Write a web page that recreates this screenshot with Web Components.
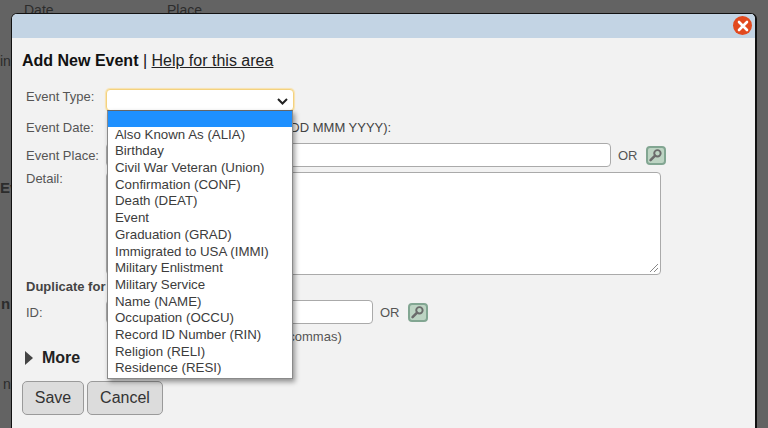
<!DOCTYPE html>
<html>
<head>
<meta charset="utf-8">
<title>Add New Event</title>
<style>
  html, body { margin: 0; height: 100%; overflow: hidden; }
  body { font-family: "Liberation Sans", Arial, sans-serif; font-size: 13px; color: #333; }
</style>
</head>
<body>
<event-page>
  <event-dialog>
    <event-form></event-form>
  </event-dialog>
</event-page>

<script>
const keyIcon = `
  <svg width="15" height="15" viewBox="0 0 14 14" aria-hidden="true">
    <circle cx="8.8" cy="5" r="3" fill="none" stroke="#6b6b6b" stroke-width="1.8"/>
    <path d="M6.6 7.2 2.4 11.4" stroke="#6b6b6b" stroke-width="2.4" stroke-linecap="round"/>
  </svg>`;

class EventPage extends HTMLElement {
  constructor() {
    super();
    this.attachShadow({ mode: 'open' });
    this.shadowRoot.innerHTML = `
      <style>
        :host { display: block; position: relative; width: 768px; height: 428px; overflow: hidden; background: #636363; color: #333; }
        .bg { position: absolute; font-size: 14px; color: #2c2c2c; }
        .bold { font-weight: bold; }
        .sheet { padding: 13px 11px 0 11px; }
      </style>
      <span class="bg" style="left:24px;top:2px">Date</span>
      <span class="bg" style="left:167px;top:2px">Place</span>
      <span class="bg" style="left:0;top:53px">in</span>
      <span class="bg bold" style="left:0;top:179px;font-size:15px">Ev</span>
      <span class="bg bold" style="left:1px;top:295px;font-size:15px">n</span>
      <span class="bg" style="left:3px;top:376px">n</span>
      <div class="sheet"><slot></slot></div>
    `;
  }
}

class EventDialog extends HTMLElement {
  constructor() {
    super();
    this.attachShadow({ mode: 'open' });
    this.shadowRoot.innerHTML = `
      <style>
        :host { display: block; width: 746px; height: 440px; box-sizing: border-box; border: 1px solid #111; border-right-width: 2px; border-radius: 6px 6px 0 0; background: #f2f2f2; position: relative; overflow: hidden; }
        .bar { height: 24px; background: #c3d4e4; }
        .close { position: absolute; top: 2px; right: 3px; width: 19px; height: 19px; border-radius: 50%; background: #e2491e; display: grid; place-items: center; }
      </style>
      <div class="bar"></div>
      <div class="close">
        <svg width="12" height="12" viewBox="0 0 12 12" aria-hidden="true">
          <path d="M2 2 10 10M10 2 2 10" stroke="#fff" stroke-width="2.6" stroke-linecap="round"/>
        </svg>
      </div>
      <slot></slot>
    `;
  }
}

class EventForm extends HTMLElement {
  constructor() {
    super();
    this.attachShadow({ mode: 'open' });
    this.shadowRoot.innerHTML = `
      <style>
        :host { display: block; position: relative; padding: 13px 10px 0; font-size: 13px; color: #444; }
        h2 { margin: 0; font-size: 16px; line-height: 20px; font-weight: normal; color: #111; }
        h2 b { font-weight: bold; }
        h2 a { color: #222; text-decoration: underline; }
        .row { display: grid; grid-template-columns: 80px 1fr; align-items: center; padding-left: 4px; }
        .row label { color: #555; }
        .type { margin-top: 18px; height: 22px; }
        .type label { margin-top: -7px; }
        .date { margin-top: 4px; height: 24px; }
        .place { margin-top: 4px; height: 24px; }
        .detail { margin-top: 5px; align-items: start; }
        .detail label { margin-top: -1px; }
        .line { display: flex; align-items: center; }
        .box { box-sizing: border-box; background: #fff; border: 1px solid #aaa; border-radius: 4px; }
        .select { width: 188px; height: 22px; border-color: #f4d27e; box-shadow: 0 0 1px 1px #f8e2ad; position: relative; }
        .select svg { position: absolute; right: 5px; top: 8px; }
        .hint { margin-left: 180px; }
        .or { margin: 0 7px; color: #555; }
        .key { box-sizing: border-box; width: 20px; height: 19px; border: 2px solid #82a692; border-radius: 4px; background: #bdd4c3; display: grid; place-items: center; margin-left: 1px; }
        .key svg { width: 15px; height: 15px; }
        .text { height: 24px; }
        .area { position: relative; width: 555px; height: 103px; }
        .grip { position: absolute; right: 1px; bottom: 1px; }
        h3 { margin: 3px 0 0 4px; font-size: 13px; line-height: 18px; color: #444; }
        .id { margin-top: 4px; height: 24px; }
        .sep { margin: 3px 0 0 181px; height: 20px; line-height: 20px; color: #555; }
        .more { display: flex; align-items: center; margin: 1px 0 0 3px; font-size: 16px; font-weight: bold; color: #222; line-height: 20px; }
        .more i { width: 0; height: 0; border-left: 8px solid #444; border-top: 7.5px solid transparent; border-bottom: 7.5px solid transparent; margin-right: 9px; }
        .buttons { display: flex; gap: 3px; margin-top: 13px; }
        button { box-sizing: border-box; height: 34px; border: 1px solid #9a9a9a; border-radius: 5px; background: #dcdcdc; font: 16px "Liberation Sans", Arial, sans-serif; color: #333; padding: 0; }
        .save { width: 62px; }
        .cancel { width: 76px; }
        .menu { position: absolute; left: 95px; top: 72px; width: 186px; box-sizing: border-box; background: #fff; border: 1px solid #8a8a8a; border-top-color: #666; box-shadow: 2px 3px 5px rgba(0,0,0,.4); color: #3c3c3c; font-size: 13.3px; line-height: 16.7px; padding-bottom: 1px; }
        .menu div { height: 16.7px; padding-left: 7px; white-space: nowrap; }
        .menu .on { height: 15.7px; background: #1e90ff; }
      </style>
      <h2><b>Add New Event</b> | <a>Help for this area</a></h2>
      <div class="row type">
        <label>Event Type:</label>
        <div class="box select">
          <svg width="11" height="7" viewBox="0 0 11 7" aria-hidden="true"><path d="M1 1 5.500 5.500 10 1" fill="none" stroke="#222" stroke-width="2"/></svg>
        </div>
      </div>
      <div class="row date">
        <label>Event Date:</label>
        <div class="hint">(DD MMM YYYY):</div>
      </div>
      <div class="row place">
        <label>Event Place:</label>
        <div class="line">
          <div class="box text" style="width:505px"></div>
          <span class="or">OR</span>
          <div class="key">${keyIcon}</div>
        </div>
      </div>
      <div class="row detail">
        <label>Detail:</label>
        <div class="box area">
          <svg class="grip" width="12" height="12" viewBox="0 0 12 12" aria-hidden="true"><path d="M11 3 3 11M11 7 7 11" stroke="#888" stroke-width="1"/></svg>
        </div>
      </div>
      <h3>Duplicate for</h3>
      <div class="row id">
        <label>ID:</label>
        <div class="line">
          <div class="box text" style="width:267px"></div>
          <span class="or">OR</span>
          <div class="key">${keyIcon}</div>
        </div>
      </div>
      <div class="sep">(separate with commas)</div>
      <div class="more"><i></i>More</div>
      <div class="buttons">
        <button class="save">Save</button>
        <button class="cancel">Cancel</button>
      </div>
      <div class="menu">
        <div class="on"></div>
        <div>Also Known As (ALIA)</div>
        <div>Birthday</div>
        <div>Civil War Veteran (Union)</div>
        <div>Confirmation (CONF)</div>
        <div>Death (DEAT)</div>
        <div>Event</div>
        <div>Graduation (GRAD)</div>
        <div>Immigrated to USA (IMMI)</div>
        <div>Military Enlistment</div>
        <div>Military Service</div>
        <div>Name (NAME)</div>
        <div>Occupation (OCCU)</div>
        <div>Record ID Number (RIN)</div>
        <div>Religion (RELI)</div>
        <div>Residence (RESI)</div>
      </div>
    `;
  }
}

customElements.define('event-page', EventPage);
customElements.define('event-dialog', EventDialog);
customElements.define('event-form', EventForm);
</script>
</body>
</html>
